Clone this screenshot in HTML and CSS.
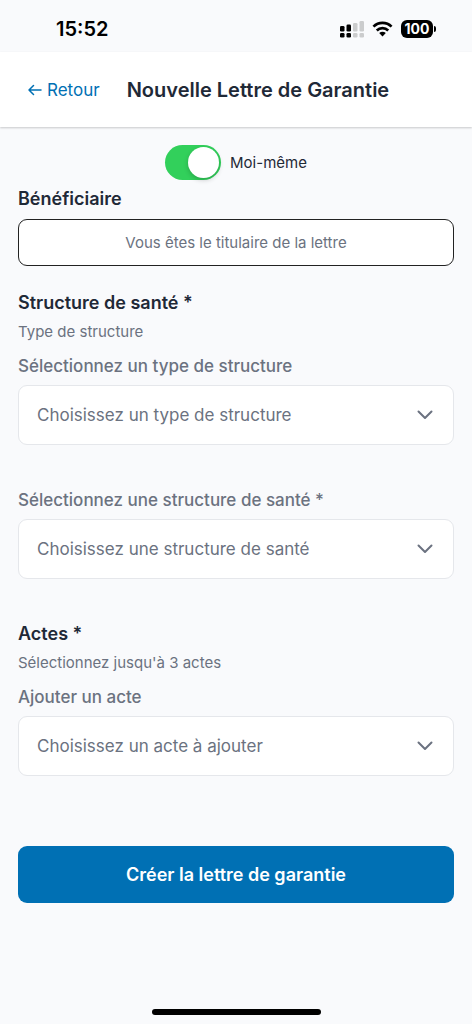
FILE: index.html
```html
<!DOCTYPE html>
<html lang="fr">
<head>
<meta charset="utf-8">
<meta name="viewport" content="width=device-width, initial-scale=1">
<title>Nouvelle Lettre de Garantie</title>
<link rel="stylesheet" href="styles.css">
</head>
<body>
<div class="screen">
  <div class="status">
    <span class="time">15:52</span>
    <div class="indicators">
      <svg class="signal" width="24" height="18" viewBox="0 0 24 18" aria-hidden="true">
        <g fill="#000"><rect x="0" y="6" width="4.500" height="5.500" rx="1.300"/><rect x="6.500" y="4.500" width="4.500" height="7" rx="1.300"/><rect x="0" y="13" width="4.500" height="4.500" rx="1.300"/><rect x="6.500" y="13" width="4.500" height="4.500" rx="1.300"/></g>
        <g fill="#cbcccd"><rect x="13" y="3" width="4.500" height="8.500" rx="1.300"/><rect x="19.500" y="1" width="4.500" height="10.500" rx="1.300"/><rect x="13" y="13" width="4.500" height="4.500" rx="1.300"/><rect x="19.500" y="13" width="4.500" height="4.500" rx="1.300"/></g>
      </svg>
      <svg class="wifi" width="21" height="16" viewBox="0 0 22 16" aria-hidden="true">
        <g fill="none" stroke="#000" stroke-width="2.800"><path d="M1.500 5.500A13.500 13.500 0 0 1 20.500 5.500"/><path d="M5 9.500A8.600 8.600 0 0 1 17 9.500"/></g>
        <path d="M7.500 12.300Q11 9.200 14.500 12.300L11 15.800Z"/>
      </svg>
      <div class="battery"><span class="level">100</span><span class="cap"></span></div>
    </div>
  </div>
  <header class="header">
    <a class="back" href="#">
      <svg width="14" height="12" viewBox="0 0 14 12" fill="none" stroke="currentColor" stroke-width="1.500" stroke-linecap="round" stroke-linejoin="round" aria-hidden="true"><path d="M13 6H1M5.500 1.500L1 6l4.500 4.500"/></svg>
      Retour
    </a>
    <h1 class="title">Nouvelle Lettre de Garantie</h1>
  </header>
  <form class="form">
    <label class="toggle">
      <input class="switch" type="checkbox" role="switch" checked>
      Moi-même
    </label>
    <label class="heading" for="beneficiary">Bénéficiaire</label>
    <input class="field" id="beneficiary" type="text" placeholder="Vous êtes le titulaire de la lettre" readonly>

    <section class="section">
      <h2 class="heading">Structure de santé *</h2>
      <p class="hint">Type de structure</p>
      <label class="label" for="type">Sélectionnez un type de structure</label>
      <div class="picker">
        <select class="select" id="type"><option>Choisissez un type de structure</option></select>
        <svg class="chevron" width="16" height="10" viewBox="0 0 16 10" aria-hidden="true"><path d="M1.500 1.500L8 8l6.500-6.500"/></svg>
      </div>
      <label class="label next" for="structure">Sélectionnez une structure de santé *</label>
      <div class="picker">
        <select class="select" id="structure"><option>Choisissez une structure de santé</option></select>
        <svg class="chevron" width="16" height="10" viewBox="0 0 16 10" aria-hidden="true"><path d="M1.500 1.500L8 8l6.500-6.500"/></svg>
      </div>
    </section>

    <section class="section acts">
      <h2 class="heading">Actes *</h2>
      <p class="hint">Sélectionnez jusqu'à 3 actes</p>
      <label class="label" for="act">Ajouter un acte</label>
      <div class="picker">
        <select class="select" id="act"><option>Choisissez un acte à ajouter</option></select>
        <svg class="chevron" width="16" height="10" viewBox="0 0 16 10" aria-hidden="true"><path d="M1.500 1.500L8 8l6.500-6.500"/></svg>
      </div>
    </section>
    <button class="submit" type="submit">Créer la lettre de garantie</button>
  </form>
  <div class="home"></div>
</div>
</body>
</html>
```
FILE: styles.css
```css
* { box-sizing: border-box; }
body {
  margin: 0;
  background: #f9fafc;
  color: #1f2937;
  font-family: Inter, "Liberation Sans", sans-serif;
  font-size: 17px;
  line-height: 24px;
}
h1, h2, p { margin: 0; }
input, select, button { font: inherit; }
.screen { display: flex; flex-direction: column; min-height: 100vh; }
.status {
  display: flex;
  align-items: center;
  justify-content: space-between;
  height: 52px;
  padding: 5px 36px 0 56px;
  color: #000;
}
.time { font-size: 20px; font-weight: 600; }
.indicators { display: flex; align-items: center; gap: 8px; }
.battery { display: flex; align-items: center; gap: 1px; }
.level {
  width: 32px;
  border-radius: 6px;
  background: #000;
  color: #fff;
  font-size: 14px;
  font-weight: 700;
  line-height: 18px;
  text-align: center;
}
.cap { width: 2px; height: 6px; border-radius: 0 2px 2px 0; background: #000; }
.header {
  display: flex;
  align-items: center;
  gap: 27px;
  height: 75px;
  padding: 0 28px;
  background: #fff;
  box-shadow: 0 1px 2px rgba(0, 0, 0, 0.2);
}
.back {
  display: flex;
  align-items: center;
  gap: 5px;
  color: #0070b4;
  text-decoration: none;
}
.title { font-size: 20px; font-weight: 600; white-space: nowrap; }
.form { display: flex; flex-direction: column; padding: 18px; }
.toggle {
  display: flex;
  align-items: center;
  align-self: center;
  gap: 9px;
  margin-bottom: 7px;
  font-size: 15px;
}
.switch {
  display: flex;
  align-items: center;
  justify-content: flex-end;
  width: 56px;
  height: 35px;
  margin: 0;
  padding: 2px;
  border-radius: 18px;
  background: #32d05b;
  appearance: none;
}
.switch::before {
  content: "";
  width: 31px;
  height: 31px;
  border-radius: 50%;
  background: #fff;
  box-shadow: 0 2px 5px rgba(0, 0, 0, 0.2);
}
.switch:not(:checked) { justify-content: flex-start; background: #d1d5db; }
.heading { font-size: 18px; font-weight: 600; }
.field {
  width: 100%;
  height: 47px;
  margin-top: 8px;
  padding: 0 18px;
  border: 1px solid #222;
  border-radius: 9px;
  background: #fff;
  font-size: 15px;
  text-align: center;
}
.field::placeholder { color: #6b7280; opacity: 1; }
.section { display: flex; flex-direction: column; margin-top: 25px; }
.acts { margin-top: 43px; }
.hint { margin: 7px 0 12px; color: #6b7280; font-size: 15px; line-height: 20px; }
.label { color: #6b7280; font-weight: 500; }
.next { margin-top: 43px; }
.picker { display: grid; align-items: center; margin-top: 7px; }
.select {
  grid-area: 1 / 1;
  width: 100%;
  height: 60px;
  padding: 0 48px 0 18px;
  border: 1px solid #e5e7eb;
  border-radius: 9px;
  background: #fff;
  color: #6b7280;
  appearance: none;
}
.chevron {
  grid-area: 1 / 1;
  justify-self: end;
  margin-right: 21px;
  fill: none;
  stroke: #6b7280;
  stroke-width: 2;
  stroke-linecap: round;
  stroke-linejoin: round;
  pointer-events: none;
}
.submit {
  height: 57px;
  margin-top: 70px;
  border: 0;
  border-radius: 9px;
  background: #0070b4;
  color: #fff;
  font-size: 18px;
  font-weight: 600;
}
.home {
  width: 169px;
  height: 6px;
  margin: auto auto 9px;
  border-radius: 3px;
  background: #000;
}
```
